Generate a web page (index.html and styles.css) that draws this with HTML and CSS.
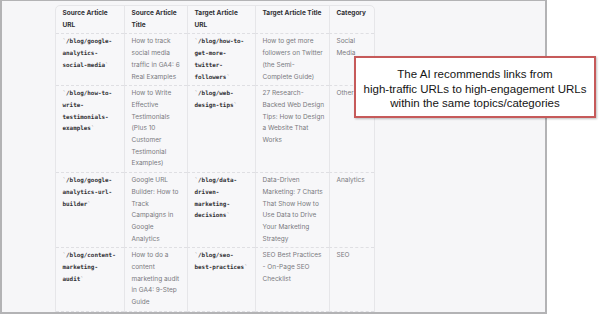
FILE: index.html
```html
<!DOCTYPE html>
<html lang="en">
<head>
    <meta charset="UTF-8">
    <title>Internal link recommendations</title>
    <link rel="stylesheet" href="styles.css">
</head>
<body>
    <div class="shot-frame">
        <table class="link-table">
            <colgroup>
                <col class="c-url">
                <col class="c-title">
                <col class="c-url2">
                <col class="c-title2">
                <col class="c-cat">
            </colgroup>
            <thead>
                <tr>
                    <th>Source Article<br>URL</th>
                    <th>Source Article<br>Title</th>
                    <th>Target Article<br>URL</th>
                    <th>Target Article Title</th>
                    <th>Category</th>
                </tr>
            </thead>
            <tbody>
                <tr>
                    <td><code><span class="tick">`</span>/blog/google-<br>analytics-<br>social-media<span class="tick">`</span></code></td>
                    <td>How to track<br>social media<br>traffic in GA4: 6<br>Real Examples</td>
                    <td><code><span class="tick">`</span>/blog/how-to-<br>get-more-<br>twitter-<br>followers<span class="tick">`</span></code></td>
                    <td>How to get more<br>followers on Twitter<br>(the Semi-<br>Complete Guide)</td>
                    <td>Social<br>Media</td>
                </tr>
                <tr>
                    <td><code><span class="tick">`</span>/blog/how-to-<br>write-<br>testimonials-<br>examples<span class="tick">`</span></code></td>
                    <td>How to Write<br>Effective<br>Testimonials<br>(Plus 10<br>Customer<br>Testimonial<br>Examples)</td>
                    <td><code><span class="tick">`</span>/blog/web-<br>design-tips<span class="tick">`</span></code></td>
                    <td>27 Research-<br>Backed Web Design<br>Tips: How to Design<br>a Website That<br>Works</td>
                    <td>Other</td>
                </tr>
                <tr>
                    <td><code><span class="tick">`</span>/blog/google-<br>analytics-url-<br>builder<span class="tick">`</span></code></td>
                    <td>Google URL<br>Builder: How to<br>Track<br>Campaigns in<br>Google<br>Analytics</td>
                    <td><code><span class="tick">`</span>/blog/data-<br>driven-<br>marketing-<br>decisions<span class="tick">`</span></code></td>
                    <td>Data-Driven<br>Marketing: 7 Charts<br>That Show How to<br>Use Data to Drive<br>Your Marketing<br>Strategy</td>
                    <td>Analytics</td>
                </tr>
                <tr>
                    <td><code><span class="tick">`</span>/blog/content-<br>marketing-<br>audit<span class="tick">`</span></code></td>
                    <td>How to do a<br>content<br>marketing audit<br>in GA4: 9-Step<br>Guide</td>
                    <td><code><span class="tick">`</span>/blog/seo-<br>best-practices<span class="tick">`</span></code></td>
                    <td>SEO Best Practices<br>- On-Page SEO<br>Checklist</td>
                    <td>SEO</td>
                </tr>
                <tr>
                    <td>&nbsp;</td>
                    <td>&nbsp;</td>
                    <td>&nbsp;</td>
                    <td>&nbsp;</td>
                    <td>&nbsp;</td>
                </tr>
            </tbody>
        </table>
    </div>

    <div class="callout">
        The AI recommends links from<br>
        high-traffic URLs to high-engagement URLs<br>
        within the same topics/categories
    </div>
</body>
</html>
```

FILE: styles.css
```css
body {
    margin: 0;
    background-color: #fff;
    font-family: Inter, "Noto Sans", sans-serif;
    width: 600px;
    height: 314px;
    overflow: hidden;
    position: relative;
}

/* screenshot frame */
.shot-frame {
    width: 490px;
    height: 307px;
    border: 2px solid #b3b3b5;
    border-top-width: 1px;
    background-color: #f6f6f8;
    padding: 4px 0 0 53px;
    overflow: hidden;
}

/* table */
.link-table {
    table-layout: fixed;
    width: 318px;
    border-collapse: separate;
    border-spacing: 0;
    border: 1px solid #e6e6e9;
    border-radius: 5px 5px 0 0;
    background-color: #f7f7f9;
    font-size: 6.5px;
    line-height: 11.7px;
}
.c-url { width: 68px; }
.c-title { width: 63px; }
.c-url2 { width: 68px; }
.c-title2 { width: 74px; }
.c-cat { width: 45px; }

.link-table th,
.link-table td {
    text-align: left;
    vertical-align: top;
    padding: 2px 6px 2px 6.5px;
    white-space: nowrap;
    overflow: hidden;
    border-left: 1px solid #e6e6e9;
    border-bottom: 1px dashed #dfdfe3;
}
.link-table th:first-child,
.link-table td:first-child {
    border-left: none;
}
.link-table th {
    font-weight: 700;
    color: #2f2f33;
}
.link-table td {
    color: #7a7a80;
}
.link-table code {
    display: block;
    font-family: "DejaVu Sans Mono", "Liberation Mono", monospace;
    font-size: 5.9px;
    line-height: 11.7px;
    font-weight: 700;
    color: #2f2f33;
}
.link-table code .tick {
    font-weight: 400;
    color: #9a9aa0;
}

/* annotation box */
.callout {
    position: absolute;
    left: 354px;
    top: 56px;
    width: 242px;
    height: 62px;
    box-sizing: border-box;
    border: 2px solid #c65a5a;
    background-color: #fff;
    box-shadow: 1px 1px 2px rgba(0,0,0,0.25);
    font-family: "Liberation Sans", Arial, sans-serif;
    font-size: 11.5px;
    line-height: 14.5px;
    color: #151515;
    text-align: center;
    padding-top: 9px;
}
```
